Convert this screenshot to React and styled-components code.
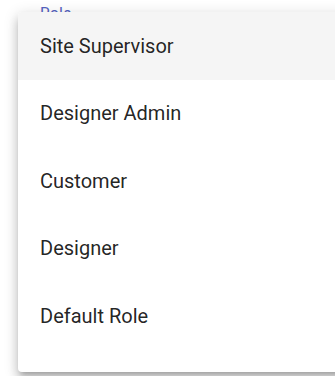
import React from "react";
import styled, { createGlobalStyle } from "styled-components";

const GlobalStyle = createGlobalStyle`
  html, body {
    margin: 0;
    padding: 0;
    background: #fff;
    font-family: Roboto, "Helvetica Neue", Arial, sans-serif;
  }
`;

const Page = styled.div`
  position: relative;
  width: 335px;
  height: 376px;
  overflow: hidden;
`;

const FieldLabel = styled.label`
  display: block;
  margin: 4px 0 0 40px;
  font-size: 16px;
  line-height: 19px;
  color: #5563c1;
`;

const Paper = styled.ul`
  position: absolute;
  top: 12px;
  left: 18px;
  width: 340px;
  height: 360px;
  margin: 0;
  padding: 0;
  list-style: none;
  background: #fff;
  border-radius: 4px;
  box-shadow: 0px 5px 5px -3px rgba(0, 0, 0, 0.2),
    0px 8px 10px 1px rgba(0, 0, 0, 0.14), 0px 3px 14px 2px rgba(0, 0, 0, 0.12);
  overflow: hidden;
`;

const Item = styled.li`
  display: flex;
  align-items: center;
  height: 67.5px;
  padding-left: 22px;
  font-size: 20px;
  color: rgba(0, 0, 0, 0.87);
  background: ${(p) => (p.$active ? "#f5f5f5" : "transparent")};
  cursor: pointer;
`;

const roles = [
  "Site Supervisor",
  "Designer Admin",
  "Customer",
  "Designer",
  "Default Role",
];

export default function App() {
  return (
    <Page>
      <GlobalStyle />
      <FieldLabel>Role</FieldLabel>
      <Paper role="listbox">
        {roles.map((r, i) => (
          <Item key={r} $active={i === 0}>
            {r}
          </Item>
        ))}
      </Paper>
    </Page>
  );
}
